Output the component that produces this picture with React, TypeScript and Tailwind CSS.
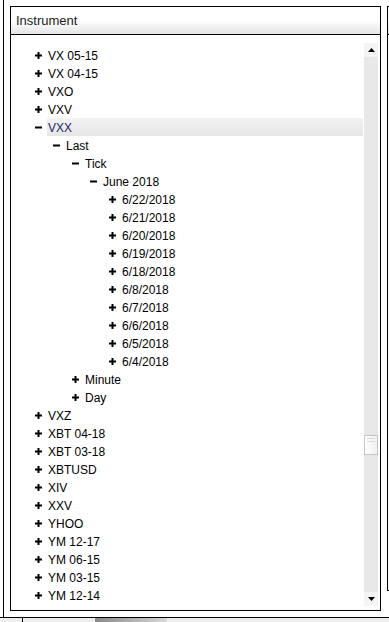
import React from "react";

type Node = { label: string; level: number; open?: boolean; selected?: boolean };

const rows: Node[] = [
  { label: "VX 05-15", level: 0 },
  { label: "VX 04-15", level: 0 },
  { label: "VXO", level: 0 },
  { label: "VXV", level: 0 },
  { label: "VXX", level: 0, open: true, selected: true },
  { label: "Last", level: 1, open: true },
  { label: "Tick", level: 2, open: true },
  { label: "June 2018", level: 3, open: true },
  { label: "6/22/2018", level: 4 },
  { label: "6/21/2018", level: 4 },
  { label: "6/20/2018", level: 4 },
  { label: "6/19/2018", level: 4 },
  { label: "6/18/2018", level: 4 },
  { label: "6/8/2018", level: 4 },
  { label: "6/7/2018", level: 4 },
  { label: "6/6/2018", level: 4 },
  { label: "6/5/2018", level: 4 },
  { label: "6/4/2018", level: 4 },
  { label: "Minute", level: 2 },
  { label: "Day", level: 2 },
  { label: "VXZ", level: 0 },
  { label: "XBT 04-18", level: 0 },
  { label: "XBT 03-18", level: 0 },
  { label: "XBTUSD", level: 0 },
  { label: "XIV", level: 0 },
  { label: "XXV", level: 0 },
  { label: "YHOO", level: 0 },
  { label: "YM 12-17", level: 0 },
  { label: "YM 06-15", level: 0 },
  { label: "YM 03-15", level: 0 },
  { label: "YM 12-14", level: 0 },
];

// left padding per depth, roughly 18px a level
const indent = ["pl-[24px]", "pl-[42px]", "pl-[61px]", "pl-[79px]", "pl-[98px]"];

function Toggle({ open }: { open?: boolean }) {
  return (
    <svg width="7" height="7" viewBox="0 0 7 7" className="block">
      <rect x="0" y="2.5" width="7" height="2" fill="#000" />
      {!open && <rect x="2.5" y="0" width="2" height="7" fill="#000" />}
    </svg>
  );
}

function TreeRow({ node }: { node: Node }) {
  return (
    <div className={`flex h-[18px] items-center ${indent[node.level]}`}>
      <div className="flex w-[12px] shrink-0 items-center pt-[1px]">
        <Toggle open={node.open} />
      </div>
      <span
        className={`flex h-[18px] items-center pl-[1px] pt-[2px] text-[12px] leading-none ${
          node.selected
            ? "flex-1 bg-gradient-to-b from-[#f2f2f2] to-[#e6e6e6] text-[#26266e]"
            : "text-black"
        }`}
      >
        {node.label}
      </span>
    </div>
  );
}

function ScrollBar() {
  return (
    <div className="mb-[4px] mr-[2px] mt-[8px] flex w-[14px] shrink-0 flex-col bg-[#e8e8e8]">
      <div className="flex h-[14px] items-center justify-center bg-[#f4f4f4]">
        <svg width="7" height="4" viewBox="0 0 7 4">
          <path d="M0 4 L3.5 0 L7 4 Z" fill="#000" />
        </svg>
      </div>
      <div className="h-[378px]" />
      <div className="flex h-[20px] flex-col gap-[2px] border border-[#c6c6c6] bg-gradient-to-r from-white to-[#f0f0f0] px-[2px] pt-[2px]">
        <div className="h-px bg-[#dcdcdc]" />
        <div className="h-px bg-[#dcdcdc]" />
      </div>
      <div className="flex-1" />
      <div className="flex h-[14px] items-center justify-center bg-[#f4f4f4]">
        <svg width="7" height="4" viewBox="0 0 7 4">
          <path d="M0 0 L7 0 L3.5 4 Z" fill="#000" />
        </svg>
      </div>
    </div>
  );
}

function PanelHeader({ title }: { title?: string }) {
  return (
    <div className="flex h-[28px] items-center border-b border-black bg-gradient-to-b from-white via-white to-[#e4e4e4] pl-[5px] pt-[1px] text-[13px] text-[#222]">
      {title}
    </div>
  );
}

export default function App() {
  return (
    <div className="h-[622px] w-[389px] overflow-hidden bg-white font-['Liberation_Sans',Arial,sans-serif]">
      <div className="h-[618px] border-b border-black">
        <div className="ml-[3px] flex h-full border-l border-black">
          {/* Instrument panel */}
          <div className="ml-[6px] mt-[6px] flex h-[605px] w-[371px] shrink-0 flex-col border border-black">
            <PanelHeader title="Instrument" />
            <div className="flex h-[575px] overflow-hidden">
              <div className="flex-1 pr-[1px] pt-[11px]">
                {rows.map((n, i) => (
                  <TreeRow key={i} node={n} />
                ))}
              </div>
              <ScrollBar />
            </div>
          </div>
          {/* next panel, cut off at the right edge */}
          <div className="ml-[6px] mt-[6px] flex h-[585px] w-[40px] shrink-0 flex-col border border-black">
            <PanelHeader />
          </div>
        </div>
      </div>
      <div className="flex h-[4px] bg-[#eeeeee]">
        <div className="ml-[22px] w-px bg-black" />
        <div className="ml-[72px] w-[72px] bg-gradient-to-r from-[#8a8a8a] to-[#d8d8d8]" />
      </div>
    </div>
  );
}
